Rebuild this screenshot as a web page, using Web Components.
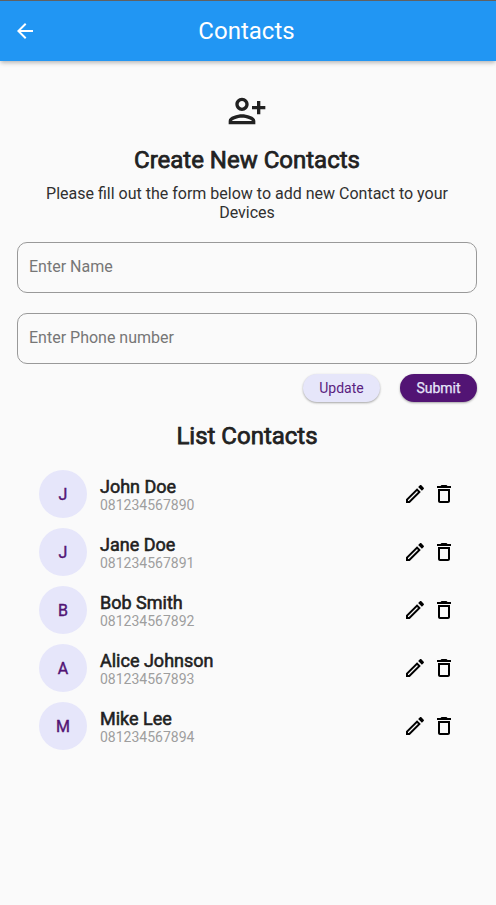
<!DOCTYPE html>
<html lang="en">
<head>
<meta charset="utf-8">
<title>Contacts</title>
<style>
body { margin: 0; background: #fafafa; font-family: Roboto, "Liberation Sans", sans-serif; color: #212121; }
</style>
</head>
<body>
<contacts-page></contacts-page>
<script>
const ICONS = {
  back: 'M20 11H7.83l5.59-5.59L12 4l-8 8 8 8 1.41-1.41L7.83 13H20v-2z',
  add: 'M9 12c2.21 0 4-1.79 4-4s-1.79-4-4-4-4 1.79-4 4 1.79 4 4 4zm0-6c1.1 0 2 .9 2 2s-.9 2-2 2-2-.9-2-2 .9-2 2-2zm0 8c-2.67 0-8 1.34-8 4v2h16v-2c0-2.66-5.33-4-8-4zm-6 4c.22-.72 3.31-2 6-2 2.7 0 5.8 1.29 6 2H3zM20 9V6h-2v3h-3v2h3v3h2v-3h3V9z',
  edit: 'M14.06 9.02l.92.92L5.92 19H5v-.92l9.06-9.06M17.66 3c-.25 0-.51.1-.7.29l-1.83 1.83 3.75 3.75 1.83-1.83c.39-.39.39-1.02 0-1.41l-2.34-2.34c-.2-.2-.45-.29-.71-.29zm-3.6 3.19L3 17.25V21h3.75L17.81 9.94l-3.75-3.75z',
  trash: 'M6 19c0 1.1.9 2 2 2h8c1.1 0 2-.9 2-2V7H6v12zM8 9h8v10H8V9zm7.5-5l-1-1h-5l-1 1H5v2h14V4h-3.5z'
};

function define(name, markup, setup) {
  const template = document.createElement('template');
  template.innerHTML = markup;
  customElements.define(name, class extends HTMLElement {
    constructor() {
      super();
      this.attachShadow({ mode: 'open' }).append(template.content.cloneNode(true));
    }
    connectedCallback() { if (setup) setup(this, this.shadowRoot); }
  });
}

define('md-icon', `
<style>
:host { display: block; width: var(--size, 24px); height: var(--size, 24px); flex: none; }
svg { display: block; width: 100%; height: 100%; fill: currentColor; }
</style>
<svg viewBox="0 0 24 24" aria-hidden="true"><path/></svg>`,
(host, root) => root.querySelector('path').setAttribute('d', ICONS[host.getAttribute('name')]));

define('app-bar', `
<style>
:host { display: grid; grid-template-columns: 50px 1fr 53px; align-items: center; box-sizing: border-box;
  height: 61px; border-top: 1px solid #616161; background: #2196f3; color: #fff;
  box-shadow: 0 2px 4px -1px rgba(0,0,0,.2), 0 3px 5px rgba(0,0,0,.08), 0 1px 6px rgba(0,0,0,.06); }
md-icon { margin-left: 13px; }
h1 { margin: 0; font-size: 24px; line-height: 28px; font-weight: 400; text-align: center; }
</style>
<md-icon name="back"></md-icon><h1><slot></slot></h1>`);

define('section-title', `
<style>
:host { display: block; text-align: center; }
h2 { margin: 0; font-size: 24px; line-height: 28px; font-weight: 400; -webkit-text-stroke: .75px currentColor; }
</style>
<h2><slot></slot></h2>`);

define('text-field', `
<style>
:host { display: flex; box-sizing: border-box; height: 51px; padding: 0 11px 2px; align-items: center;
  border: 1px solid #999; border-radius: 10px; color: #767676; font-size: 16px; line-height: 19px; }
</style>
<span><slot></slot></span>`);

define('pill-button', `
<style>
:host { display: block; }
button { display: block; width: 100%; height: 28px; border: 0; padding: 0; border-radius: 14px;
  font: 400 14px/28px Roboto, sans-serif; background: #e6e6fa; color: #5a1e80;
  box-shadow: 0 1px 2px rgba(0,0,0,.24), 0 1px 3px rgba(0,0,0,.12); }
:host([primary]) button { background: #521474; color: #e6e6fa; -webkit-text-stroke: .25px currentColor; }
</style>
<button><slot></slot></button>`);

define('contact-row', `
<style>
:host { display: flex; align-items: center; height: 48px; }
.avatar { width: 48px; height: 48px; border-radius: 50%; background: #e6e6fa; color: #521474;
  display: grid; place-items: center; font-size: 16px; line-height: 19px; font-weight: 400; -webkit-text-stroke: .4px currentColor; }
.info { flex: 1; margin-left: 13px; padding-top: 2px; }
.name { font-size: 18px; line-height: 20px; font-weight: 400; -webkit-text-stroke: .55px currentColor; }
.phone { font-size: 14px; line-height: 16px; color: #9e9e9e; -webkit-text-stroke: 0; }
.actions { display: flex; gap: 5px; color: #000; }
</style>
<div class="avatar"></div>
<div class="info"><div class="name"><slot></slot></div><div class="phone"><slot name="phone"></slot></div></div>
<div class="actions"><md-icon name="edit"></md-icon><md-icon name="trash"></md-icon></div>`,
(host, root) => root.querySelector('.avatar').textContent = host.getAttribute('initial'));

define('contacts-page', `
<style>
:host { display: block; height: 905px; }
main { padding: 30px 19px 0 17px; }
.hero { --size: 40px; margin: 0 auto; }
.create { margin-top: 15px; }
p { margin: 10px 0 20px; font-size: 16px; line-height: 19px; text-align: center; padding: 0 20px; color: #303030; }
.fields { display: grid; gap: 20px; }
.buttons { display: grid; grid-template-columns: 77px 77px; gap: 20px; justify-content: end; margin-top: 10px; }
.list { margin-top: 20px; }
.rows { display: grid; gap: 10px; padding: 0 21px 0 22px; margin-top: 20px; }
</style>
<app-bar>Contacts</app-bar>
<main>
<md-icon class="hero" name="add"></md-icon>
<section-title class="create">Create New Contacts</section-title>
<p>Please fill out the form below to add new Contact to your Devices</p>
<div class="fields"><text-field>Enter Name</text-field><text-field>Enter Phone number</text-field></div>
<div class="buttons"><pill-button>Update</pill-button><pill-button primary>Submit</pill-button></div>
<section-title class="list">List Contacts</section-title>
<div class="rows">
<contact-row initial="J">John Doe<span slot="phone">081234567890</span></contact-row>
<contact-row initial="J">Jane Doe<span slot="phone">081234567891</span></contact-row>
<contact-row initial="B">Bob Smith<span slot="phone">081234567892</span></contact-row>
<contact-row initial="A">Alice Johnson<span slot="phone">081234567893</span></contact-row>
<contact-row initial="M">Mike Lee<span slot="phone">081234567894</span></contact-row>
</div>
</main>`);
</script>
</body>
</html>
